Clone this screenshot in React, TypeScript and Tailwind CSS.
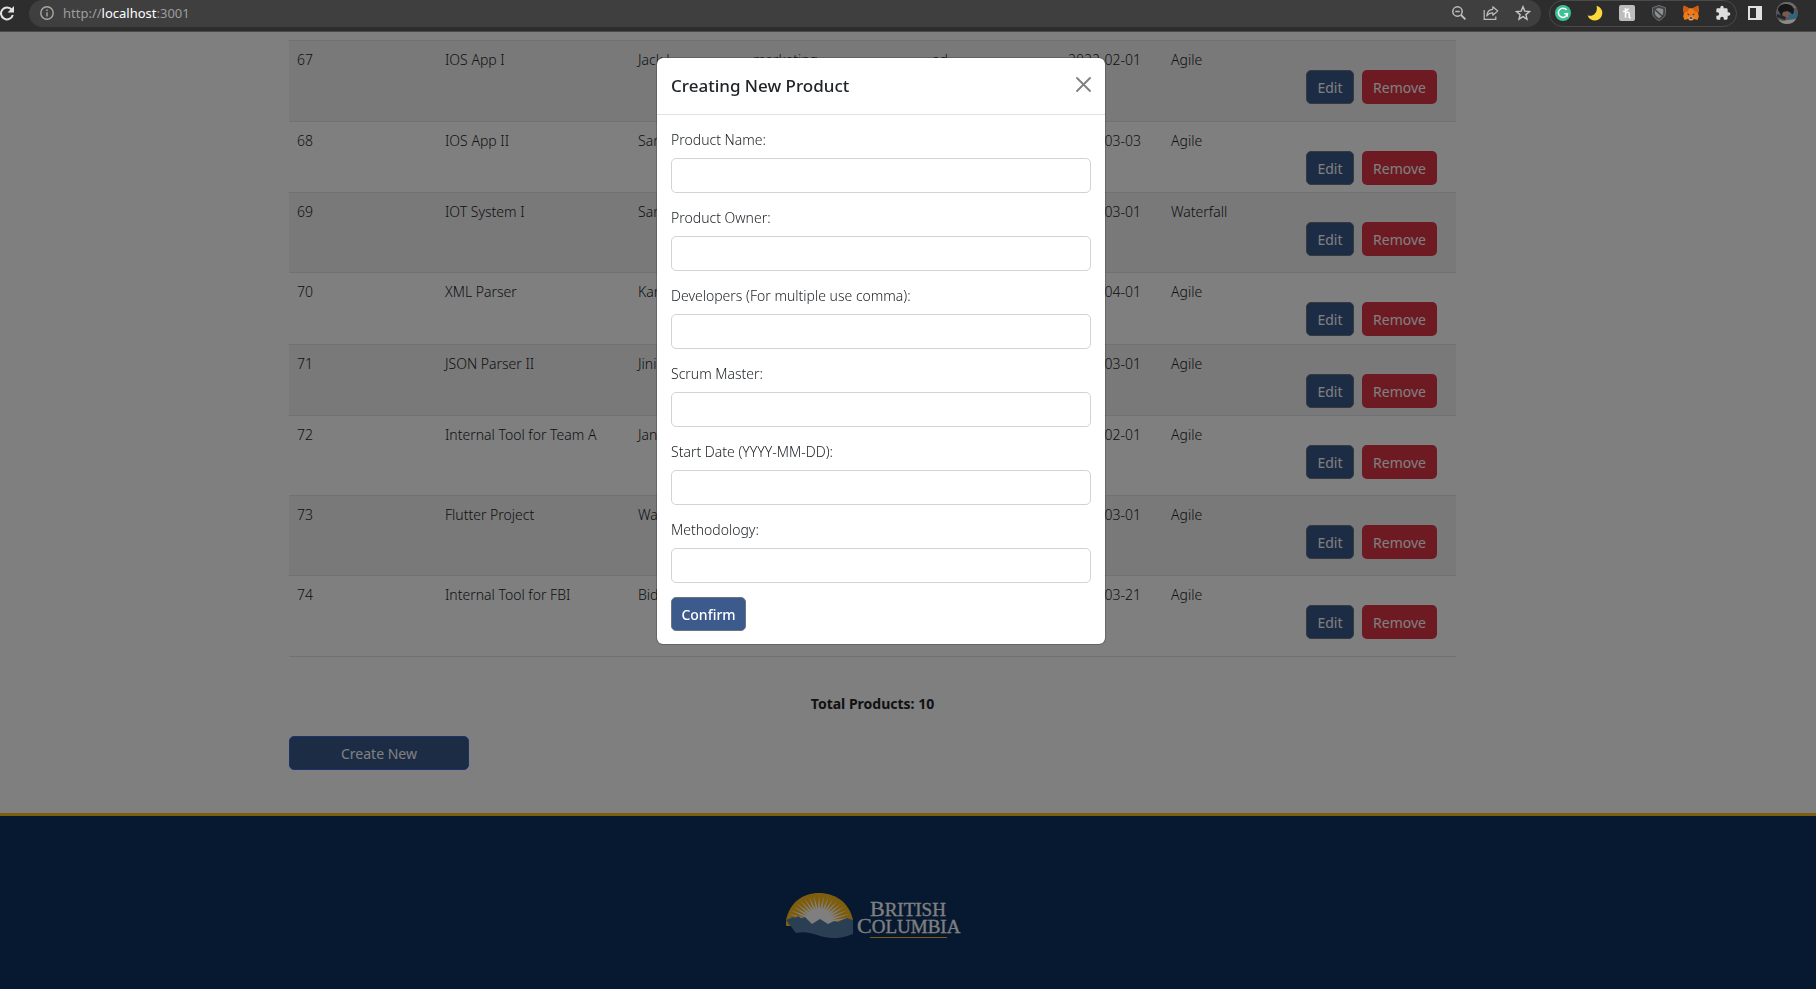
import React from "react";

type Product = {
  id: number;
  name: string;
  owner: string;
  developers: string;
  scrumMaster: string;
  startDate: string;
  methodology: string;
  height: string;
};

const products: Product[] = [
  { id: 67, name: "IOS App I", owner: "Jack l", developers: "marketing", scrumMaster: "ad", startDate: "2022-02-01", methodology: "Agile", height: "h-[81px]" },
  { id: 68, name: "IOS App II", owner: "Sam", developers: "", scrumMaster: "", startDate: "2022-03-03", methodology: "Agile", height: "h-[71px]" },
  { id: 69, name: "IOT System I", owner: "Sam", developers: "", scrumMaster: "", startDate: "2022-03-01", methodology: "Waterfall", height: "h-[80px]" },
  { id: 70, name: "XML Parser", owner: "Karl", developers: "", scrumMaster: "", startDate: "2022-04-01", methodology: "Agile", height: "h-[72px]" },
  { id: 71, name: "JSON Parser II", owner: "Jini", developers: "", scrumMaster: "", startDate: "2022-03-01", methodology: "Agile", height: "h-[71px]" },
  { id: 72, name: "Internal Tool for Team A", owner: "Jan", developers: "", scrumMaster: "", startDate: "2022-02-01", methodology: "Agile", height: "h-[80px]" },
  { id: 73, name: "Flutter Project", owner: "Wa", developers: "", scrumMaster: "", startDate: "2022-03-01", methodology: "Agile", height: "h-[80px]" },
  { id: 74, name: "Internal Tool for FBI", owner: "Bid", developers: "", scrumMaster: "", startDate: "2022-03-21", methodology: "Agile", height: "h-[81px]" },
];

const fields = [
  { id: "name", label: "Product Name:" },
  { id: "owner", label: "Product Owner:" },
  { id: "developers", label: "Developers (For multiple use comma):" },
  { id: "scrum", label: "Scrum Master:" },
  { id: "start", label: "Start Date (YYYY-MM-DD):" },
  { id: "method", label: "Methodology:" },
];

function BrowserBar() {
  return (
    <header className="relative flex h-8 items-start border-b border-[#4a4a4a] bg-[#2d2d2d] text-[#dedede]">
      <button aria-label="Reload" className="flex h-[27px] w-[29px] items-center pb-px">
        <svg width="15" height="16" viewBox="0 0 15 16" fill="none">
          <path d="M11.8 4.8A6 6 0 1 0 12.8 10" stroke="#e2e2e2" strokeWidth="2" />
          <path d="M14 1v6.4H7.6z" fill="#e2e2e2" />
        </svg>
      </button>
      <div className="flex h-[27px] flex-1 items-center rounded-full bg-[#3f3f3f] pr-[10px] pb-[2px] pl-[11px]">
        <svg width="14" height="14" viewBox="0 0 14 14" fill="none" stroke="#a8a8a8" strokeWidth="1.4">
          <circle cx="7" cy="7" r="6.2" />
          <path d="M7 6.2v4.2M7 3.4v1.5" />
        </svg>
        <span className="ml-[9px] flex-1 text-[13px] leading-5 text-[#9e9e9e]">
          http://<span className="text-white">localhost</span>:3001
        </span>
        <div className="flex items-center gap-4">
          <svg width="16" height="16" viewBox="0 0 16 16" fill="none" stroke="#bdbdbd" strokeWidth="1.5">
            <circle cx="6.5" cy="6.5" r="4.7" />
            <path d="M4.3 6.5h4.4" />
            <path d="M10 10l4.4 4.4" strokeWidth="1.9" />
          </svg>
          <svg width="16" height="16" viewBox="0 0 16 16" fill="none" stroke="#bdbdbd" strokeWidth="1.2">
            <path d="M1.2 5v9.400h11.600v-3" />
            <path d="M9.800 1.800l5 4.200-5 4.200V7.800C7 7.800 5 9 3.800 11 4 7.200 6 4.500 9.800 4.300z" strokeLinejoin="round" />
          </svg>
          <svg width="16" height="16" viewBox="0 0 16 16" fill="none" stroke="#c4c4c4" strokeWidth="1.4">
            <path d="M8 1.700l1.800 4.400 4.700.4-3.600 3.100 1.100 4.600L8 11.700l-4 2.500 1.100-4.600L1.500 6.500l4.700-.4z" />
          </svg>
        </div>
      </div>
      <div className="ml-2 flex h-[27px] w-[188px] items-center justify-between rounded-full border border-[#4a4a4a] px-[5px] pb-px">
        <svg width="16" height="16" viewBox="0 0 16 16" fill="none">
          <circle cx="8" cy="8" r="8" fill="#3fc196" />
          <path d="M11.600 4.900A4.600 4.600 0 1 0 12.500 8.700H9.200" stroke="#fff" strokeWidth="1.5" />
          <path d="M12.300 8.700v3" stroke="#fff" strokeWidth="1.200" />
        </svg>
        <svg width="16" height="16" viewBox="0 0 16 16">
          <path d="M9.500.8a7.500 7.500 0 1 1-8.900 9.400c4.800 2.300 10.800-2.200 8.900-9.400z" fill="#fbd93b" />
        </svg>
        <svg width="16" height="16" viewBox="0 0 16 16" fill="none">
          <rect width="16" height="16" rx="2" fill="#bcbcbc" />
          <path d="M4 6.500c2-.2 4.600-1.200 5.600-3M6.500 3v9.800M6.500 9c1-2 3.800-2.400 3.700-.2v3.600c.2.500.900.4 1.600.2" stroke="#fff" strokeWidth="1.500" />
        </svg>
        <svg width="16" height="16" viewBox="0 0 16 16">
          <path d="M8 .5l6.500 2.200v4.600c0 3.900-2.700 6.700-6.500 8.200C4.200 14 1.500 11.200 1.500 7.300V2.700z" fill="#414446" stroke="#6d6f70" />
          <path d="M8 3l4.200 1.300v3.200c0 2.400-1.700 4.300-4.200 5.500-2.500-1.200-4.200-3.100-4.200-5.500V4.300z" fill="#8d8f90" />
          <path d="M3.600 4.200l8 7.400" stroke="#3a3d3f" strokeWidth="1.300" />
        </svg>
        <svg width="16" height="16" viewBox="0 0 16 16">
          <path d="M.8.600l5.400 2.700h3.600L15.200.600l.600 4.400-.7 3 .7 3.600-1.300 3.300-3.500-.8L9.500 15.500h-3L5 14.100l-3.500.8L.2 11.600.9 8l-.7-3z" fill="#ee7a1a" />
          <path d="M.8.600l5.400 2.700-1.500 3L.9 8l-.7-3zM15.200.600L9.800 3.300l1.500 3L15.100 8l.7-3z" fill="#cf5c12" />
          <path d="M3.700 8.600l2.700.3-.4 1.600zM12.300 8.600l-2.700.3.4 1.600z" fill="#2e3c4c" />
          <path d="M5.500 12.200l1.200-.5h2.600l1.200.5-1 2.600h-3z" fill="#cfc4ba" />
          <path d="M6.800 12.200h2.400l.3 1.500h-3z" fill="#282828" />
        </svg>
        <svg width="16" height="16" viewBox="0 0 24 24" fill="#dedede">
          <path d="M20.500 11H19V7a2 2 0 0 0-2-2h-4V3.500a2.500 2.500 0 0 0-5 0V5H4a2 2 0 0 0-2 2v3.800h1.500a2.700 2.700 0 0 1 0 5.400H2V20c0 1.100.9 2 2 2h3.800v-1.500a2.700 2.700 0 0 1 5.400 0V22H17a2 2 0 0 0 2-2v-4h1.500a2.500 2.500 0 0 0 0-5z" />
        </svg>
      </div>
      <div className="flex h-[27px] w-[79px] items-center gap-[14px] pb-px pl-[11px]">
        <svg width="14" height="14" viewBox="0 0 14 14">
          <path d="M0 0h14v14H0zM2 2v10h6V2z" fill="#e0e0e0" fillRule="evenodd" />
        </svg>
        <svg width="22" height="22" viewBox="0 0 22 22">
          <defs>
            <clipPath id="avatar"><circle cx="11" cy="11" r="11" /></clipPath>
          </defs>
          <g clipPath="url(#avatar)">
            <rect width="22" height="22" fill="#55585a" />
            <path d="M0 0h22v6H0z" fill="#6c6b67" />
            <path d="M2 8c0-8 15-8 16 0l-1 5-3-3-6 1-2 4z" fill="#171719" />
            <path d="M7 10l5-1 2 3-1 3-4 1-3-3z" fill="#795a4c" />
            <path d="M1 12l9 3-1 3-8-3z" fill="#252629" />
            <path d="M12 13l9-2v4l-7 3z" fill="#2a6488" />
            <path d="M0 17l7 2 5-1 8-1v5H0z" fill="#8e8a82" />
          </g>
        </svg>
      </div>
    </header>
  );
}

function ProductTable() {
  return (
    <table className="w-full table-fixed border-collapse border-b border-[#dee2e6] font-light">
      <colgroup>
        <col className="w-[148px]" />
        <col className="w-[193px]" />
        <col className="w-[115px]" />
        <col className="w-[179px]" />
        <col className="w-[136px]" />
        <col className="w-[103px]" />
        <col className="w-[136px]" />
        <col />
      </colgroup>
      <tbody>
        {products.map((p) => (
          <tr key={p.id} className={`${p.height} border-t border-[#dee2e6] align-top odd:bg-[#f2f2f2]`}>
            <td className="px-2 pt-2">{p.id}</td>
            <td className="px-2 pt-2">{p.name}</td>
            <td className="px-2 pt-2">{p.owner}</td>
            <td className="px-2 pt-2">{p.developers}</td>
            <td className="px-2 pt-2">{p.scrumMaster}</td>
            <td className="px-2 pt-2 whitespace-nowrap">{p.startDate}</td>
            <td className="px-2 pt-2">{p.methodology}</td>
            <td className="pt-[29px] pr-[19px]">
              <div className="flex justify-end gap-2">
                <button className="h-[34px] w-12 rounded-[5px] border border-[#6c757d] bg-[#38598a] font-normal text-white">Edit</button>
                <button className="h-[34px] w-[75px] rounded-[5px] bg-[#dc3545] font-normal text-white">Remove</button>
              </div>
            </td>
          </tr>
        ))}
      </tbody>
    </table>
  );
}

const rays = Array.from({ length: 21 }, (_, i) => (Math.PI * (i + 0.5)) / 21);

function Logo() {
  return (
    <svg width="176" height="48" viewBox="0 0 176 48" role="img" aria-label="British Columbia">
      <defs>
        <clipPath id="sun"><path d="M1 28C5 10 18 1 34 1s30 9 34 27v6H1z" /></clipPath>
      </defs>
      <g clipPath="url(#sun)">
        <rect width="68" height="36" fill="#fcba19" />
        {rays.map((a) => (
          <path
            key={a}
            d={`M${34 + 14 * Math.cos(a - 0.09)} ${32 - 14 * Math.sin(a - 0.09)}L${34 + 33 * Math.cos(a)} ${32 - 28 * Math.sin(a)}L${34 + 14 * Math.cos(a + 0.09)} ${32 - 14 * Math.sin(a + 0.09)}z`}
            fill="#fff"
          />
        ))}
        <circle cx="34" cy="32" r="15" fill="#fff" />
      </g>
      <path d="M1 28l7-3 2 1 3-2 3 2 4-1 7 7 8-5 8 5 6-3 4 1 4-2 5-2 6 2v14c-6 2-11 4-19 4-17 0-22-8-38-5z" fill="#557ea9" />
      <g fill="#fff" stroke="#fff" strokeWidth="0.3" fontFamily="Liberation Serif, serif">
        <text x="85" y="24" fontSize="22">B<tspan fontSize="19">RITISH</tspan></text>
        <text x="72" y="41" fontSize="22">C<tspan fontSize="19">OLUMBIA</tspan></text>
      </g>
      <path d="M85 45.500h77" stroke="#fcba19" strokeWidth="1" />
    </svg>
  );
}

function CreateDialog() {
  return (
    <div className="fixed inset-x-0 top-8 bottom-0 bg-black/50 pt-[25px] pr-[54px]">
      <form
        role="dialog"
        aria-labelledby="dialog-title"
        className="mx-auto w-[450px] rounded-[7px] border border-black/20 bg-white bg-clip-padding font-light"
        onSubmit={(e) => e.preventDefault()}
      >
        <div className="flex h-[57px] items-center justify-between border-b border-[#dee2e6] px-[14px]">
          <h1 id="dialog-title" className="text-[17px] leading-7 font-medium">Creating New Product</h1>
          <button type="button" aria-label="Close" className="mb-1">
            <svg width="15" height="15" viewBox="0 0 15 15" stroke="#7f7f7f" strokeWidth="1.800" strokeLinecap="round">
              <path d="M1 1l13 13M14 1L1 14" />
            </svg>
          </button>
        </div>
        <div className="flex flex-col gap-[14px] p-[14px] pb-[13px]">
          {fields.map((f) => (
            <div key={f.id}>
              <label htmlFor={f.id} className="mb-2 block h-[21px]">{f.label}</label>
              <input id={f.id} type="text" className="block h-[35px] w-full rounded-[5px] border border-[#ced4da] bg-white px-3" />
            </div>
          ))}
          <button type="submit" className="h-[34px] w-[75px] rounded-[5px] border border-[#6c757d] bg-[#3c5a8c] font-medium text-white">Confirm</button>
        </div>
      </form>
    </div>
  );
}

export default function App() {
  return (
    <div className="flex min-h-screen flex-col bg-white font-['Noto_Sans',sans-serif] text-[14px] leading-[21px] text-[#212529]">
      <BrowserBar />
      <main className="mr-[71px] pt-2">
        <div className="mx-auto max-w-[1167px]">
          <ProductTable />
          <p className="mt-9 text-center font-bold">Total Products: 10</p>
          <button className="mt-[22px] h-[34px] w-[180px] rounded-[5px] border border-[#3b63d6] bg-[#38598a] text-white">Create New</button>
        </div>
      </main>
      <footer className="mt-[43px] flex flex-1 items-center justify-center border-t-[3px] border-[#fcba19] bg-[#0e3263] pt-[26px] pr-[71px]">
        <Logo />
      </footer>
      <CreateDialog />
    </div>
  );
}
